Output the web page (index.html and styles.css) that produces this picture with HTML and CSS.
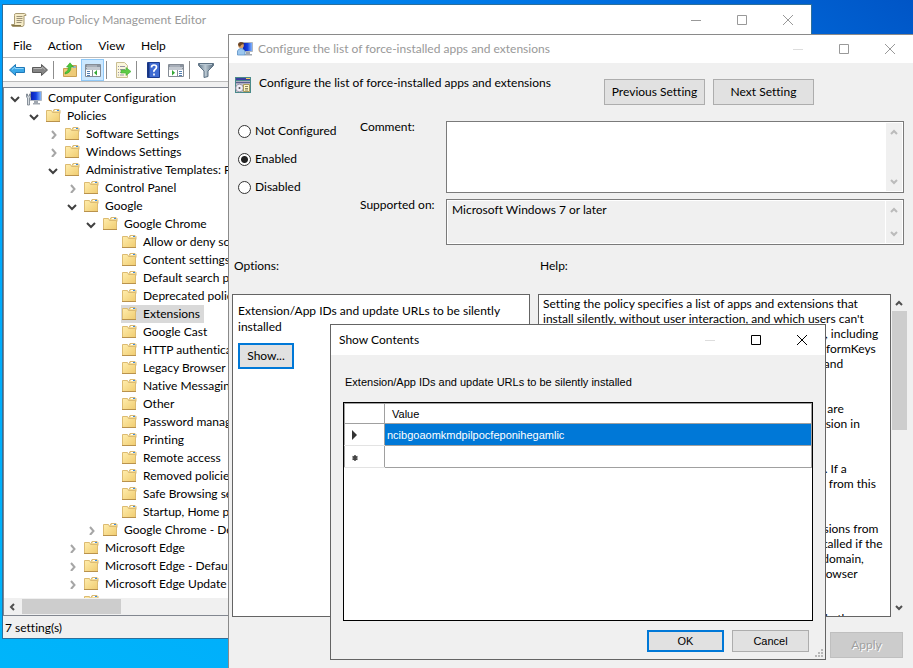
FILE: index.html
```
<!DOCTYPE html>
<html lang="en">
<head>
  <meta charset="UTF-8" />
  <meta name="viewport" content="width=device-width, initial-scale=1" />
  <title>Group Policy Management Editor</title>
  <link rel="stylesheet" href="styles.css">
</head>
<body>
  <!-- shared icons -->
  <svg class="sprite" aria-hidden="true">
    <linearGradient id="folderFill" x1="0" y1="0" x2="1" y2="1">
      <stop offset="0" stop-color="#ffedad" />
      <stop offset="1" stop-color="#f0cc70" />
    </linearGradient>
    <linearGradient id="screenFill" x1="0" y1="0" x2="1" y2="0">
      <stop offset="0" stop-color="#0a1cae" />
      <stop offset="0.5" stop-color="#1540e0" />
      <stop offset="1" stop-color="#8fc4ff" />
    </linearGradient>
    <linearGradient id="funnelFill" x1="0" y1="0" x2="1" y2="0">
      <stop offset="0" stop-color="#5c7285" />
      <stop offset="0.45" stop-color="#bccad4" />
      <stop offset="1" stop-color="#54697b" />
    </linearGradient>
    <symbol id="folder" viewBox="0 0 16 16">
      <path d="M8 3.500l1-2h5l1 1v3H8z" fill="#f5dd9a" stroke="#d8b974" />
      <path d="M10 2.500h2" stroke="#fff" />
      <path d="M12 2.500h2" stroke="#3d8be0" />
      <path d="M1.500 2.500h5l1 2h7v9h-13z" fill="url(#folderFill)" stroke="#dcbb72" />
      <path d="M1 13.500h14" stroke="#b9924c" />
    </symbol>
    <symbol id="open" viewBox="0 0 10 10"><path d="M1 4l4 4 4-4" fill="none" stroke="#404040" stroke-width="2" /></symbol>
    <symbol id="closed" viewBox="0 0 10 10"><path d="M4 2l3.500 4L4 10" fill="none" stroke="#a6a6a6" stroke-width="2" /></symbol>
    <symbol id="min" viewBox="0 0 10 10"><path d="M0 5.500h10" fill="none" stroke="currentColor" /></symbol>
    <symbol id="max" viewBox="0 0 10 10"><path d="M.5.5h9v9h-9z" fill="none" stroke="currentColor" /></symbol>
    <symbol id="close" viewBox="0 0 10 10"><path d="M0 0l10 10M10 0L0 10" fill="none" stroke="currentColor" /></symbol>
    <symbol id="up" viewBox="0 0 8 8"><path d="M1 6l3-3 3 3" fill="none" stroke="currentColor" stroke-width="2" /></symbol>
    <symbol id="down" viewBox="0 0 8 8"><path d="M1 2l3 3 3-3" fill="none" stroke="currentColor" stroke-width="2" /></symbol>
  </svg>

  <main class="desktop">
    <section class="window editor">
      <header class="titlebar">
        <svg class="icon" viewBox="0 0 16 16">
          <path d="M4.500 1.500h9q1.500 0 1.500 2h-2v9q0 2-2 2h-9q-1.500 0-1.500-2h3v-9q0-2 1-2z" fill="#f6ecc8" stroke="#a89a72" />
          <path d="M5.500 4.500h6M5.500 6.500h6M5.500 8.500h6M5.500 10.500h5" stroke="#9b9177" />
          <path d="M1 13.500h9" stroke="#857646" />
        </svg>
        <h1>Group Policy Management Editor</h1>
        <div class="controls">
          <button aria-label="Minimize"><svg><use href="#min" /></svg></button>
          <button aria-label="Maximize"><svg><use href="#max" /></svg></button>
          <button aria-label="Close"><svg><use href="#close" /></svg></button>
        </div>
      </header>
      <nav class="menubar">
        <button>File</button>
        <button>Action</button>
        <button>View</button>
        <button>Help</button>
      </nav>
      <div class="toolbar">
        <button aria-label="Back"><svg viewBox="0 0 16 16">
          <path d="M.5 8l6-5.500v3h9v5h-9v3z" fill="#3aa8e8" stroke="#1f78b8" /><path d="M3 7.500l3-2.500v1.500h8.500" fill="none" stroke="#8fd4f8" /></svg></button>
        <button aria-label="Forward"><svg viewBox="0 0 16 16">
          <path d="M15.500 8l-6-5.500v3h-9v5h9v3z" fill="#858585" stroke="#5a5a5a" /><path d="M1.500 6.500h8.500v-1.500l3 2.500" fill="none" stroke="#b4b4b4" /></svg></button>
        <i></i>
        <button aria-label="Up one level"><svg viewBox="0 0 16 16">
          <path d="M1.500 6.500h6l1-3h6v11h-13z" fill="#eecb78" stroke="#c8a052" /><path d="M9 5h5" stroke="#d9e6f4" /><path d="M11 5h3" stroke="#4b8fd0" />
          <path d="M3 10.500q3.500-1.500 3.500-5.500H4.500L8 .8l3.500 4.200H9q0 6-6 7z" fill="#4cc838" stroke="#2a9420" stroke-width=".5" /></svg></button>
        <button class="pressed" aria-label="Show tree"><svg viewBox="0 0 16 16">
          <path d="M.5 2.500h15v12H.5z" fill="#fff" stroke="#858c95" /><path d="M1 4h14M1 6.500h14" stroke="#8a939f" stroke-width="2" />
          <path d="M2 4h10M2 6.500h13" stroke="#dbe1e8" stroke-width=".7" /><path d="M7.500 8v6" stroke="#858c95" /><path d="M2 9.500h3M2 11.500h3M2 13.500h3" stroke="#537fb2" /><path d="M12 8v5.500L9 10.800z" fill="#35a835" /></svg></button>
        <i></i>
        <button aria-label="Export list"><svg viewBox="0 0 16 16">
          <path d="M1.500.5h8l3 3v12h-11z" fill="#fbf6dc" stroke="#c9be92" /><path d="M3 4.500h1M3 7.500h1M3 10.500h1M3 13h1M5 4.500h5M5 7.500h5M5 10.500h3M5 13h4" stroke="#9a94a6" />
          <path d="M6 8h5V5.500l5 4-5 4V11H6z" fill="#5fcb45" stroke="#3faf35" stroke-width=".6" /></svg></button>
        <i></i>
        <button aria-label="Help"><svg viewBox="0 0 16 16">
          <path d="M2.500.5h12v15h-12z" fill="#3f6bd2" stroke="#1c3c90" /><path d="M3.500 1v14" stroke="#173581" stroke-width="2" />
          <path d="M6.500 5.500q0-2.500 2.500-2.500t2.500 2q0 1.500-1.500 2.500T9 10M9 11.500v2" fill="none" stroke="#fff" stroke-width="1.700" /></svg></button>
        <button aria-label="Show action pane"><svg viewBox="0 0 16 16">
          <path d="M.5 2.500h15v12H.5z" fill="#fff" stroke="#858c95" /><path d="M1 4h14M1 6.500h14" stroke="#8a939f" stroke-width="2" />
          <path d="M2 4h10M1 6.500h13" stroke="#dbe1e8" stroke-width=".7" /><path d="M9.500 8v6" stroke="#858c95" /><path d="M11 9.500h3M11 11.500h3M11 13.500h3" stroke="#537fb2" /><path d="M4 8v5.500l3-2.700z" fill="#35a835" /></svg></button>
        <i></i>
        <button aria-label="Filter"><svg viewBox="0 0 16 16">
          <path d="M.5 1.500h15v2L10 9v5.500l-4 1V9L.5 3.500z" fill="url(#funnelFill)" stroke="#5d7183" /><path d="M2 2.500h12" stroke="#b6c6d2" /></svg></button>
      </div>

      <div class="pane">
        <ul class="tree">
          <li><div class="row"><svg class="twist"><use href="#open" /></svg>
            <svg class="icon" viewBox="0 0 16 16">
              <path d="M4.500 1.500h11v9h-11z" fill="url(#screenFill)" stroke="#b0b6bf" /><path d="M8 11h4v2h2v1.500H7V13h1z" fill="#a0a7b0" />
              <path d="M.5 4v3l1 1v7h2V8l1-1V4H3.500v2h-2V4z" fill="#d6dbe0" stroke="#717b86" stroke-width=".8" /></svg>Computer Configuration</div>
            <ul>
              <li><div class="row"><svg class="twist"><use href="#open" /></svg><svg class="icon"><use href="#folder" /></svg>Policies</div>
                <ul>
                  <li><div class="row"><svg class="twist"><use href="#closed" /></svg><svg class="icon"><use href="#folder" /></svg>Software Settings</div></li>
                  <li><div class="row"><svg class="twist"><use href="#closed" /></svg><svg class="icon"><use href="#folder" /></svg>Windows Settings</div></li>
                  <li><div class="row"><svg class="twist"><use href="#open" /></svg><svg class="icon"><use href="#folder" /></svg>Administrative Templates: Policy definitions</div>
                    <ul>
                      <li><div class="row"><svg class="twist"><use href="#closed" /></svg><svg class="icon"><use href="#folder" /></svg>Control Panel</div></li>
                      <li><div class="row"><svg class="twist"><use href="#open" /></svg><svg class="icon"><use href="#folder" /></svg>Google</div>
                        <ul>
                          <li><div class="row"><svg class="twist"><use href="#open" /></svg><svg class="icon"><use href="#folder" /></svg>Google Chrome</div>
                            <ul class="leaves">
                              <li><div class="row"><svg class="icon"><use href="#folder" /></svg>Allow or deny screen capture</div></li>
                              <li><div class="row"><svg class="icon"><use href="#folder" /></svg>Content settings</div></li>
                              <li><div class="row"><svg class="icon"><use href="#folder" /></svg>Default search provider</div></li>
                              <li><div class="row"><svg class="icon"><use href="#folder" /></svg>Deprecated policies</div></li>
                              <li><div class="row selected"><svg class="icon"><use href="#folder" /></svg>Extensions</div></li>
                              <li><div class="row"><svg class="icon"><use href="#folder" /></svg>Google Cast</div></li>
                              <li><div class="row"><svg class="icon"><use href="#folder" /></svg>HTTP authentication</div></li>
                              <li><div class="row"><svg class="icon"><use href="#folder" /></svg>Legacy Browser Support</div></li>
                              <li><div class="row"><svg class="icon"><use href="#folder" /></svg>Native Messaging</div></li>
                              <li><div class="row"><svg class="icon"><use href="#folder" /></svg>Other</div></li>
                              <li><div class="row"><svg class="icon"><use href="#folder" /></svg>Password manager</div></li>
                              <li><div class="row"><svg class="icon"><use href="#folder" /></svg>Printing</div></li>
                              <li><div class="row"><svg class="icon"><use href="#folder" /></svg>Remote access</div></li>
                              <li><div class="row"><svg class="icon"><use href="#folder" /></svg>Removed policies</div></li>
                              <li><div class="row"><svg class="icon"><use href="#folder" /></svg>Safe Browsing settings</div></li>
                              <li><div class="row"><svg class="icon"><use href="#folder" /></svg>Startup, Home page and New Tab page</div></li>
                            </ul>
                          </li>
                          <li><div class="row"><svg class="twist"><use href="#closed" /></svg><svg class="icon"><use href="#folder" /></svg>Google Chrome - Default Settings</div></li>
                        </ul>
                      </li>
                      <li><div class="row"><svg class="twist"><use href="#closed" /></svg><svg class="icon"><use href="#folder" /></svg>Microsoft Edge</div></li>
                      <li><div class="row"><svg class="twist"><use href="#closed" /></svg><svg class="icon"><use href="#folder" /></svg>Microsoft Edge - Default Settings</div></li>
                      <li><div class="row"><svg class="twist"><use href="#closed" /></svg><svg class="icon"><use href="#folder" /></svg>Microsoft Edge Update</div></li>
                      <li><div class="row"><svg class="icon last"><use href="#folder" /></svg></div></li>
                    </ul>
                  </li>
                </ul>
              </li>
            </ul>
          </li>
        </ul>
        <div class="hscroll">
          <svg viewBox="0 0 8 8"><path d="M6 1L3 4l3 3" fill="none" stroke="#505050" stroke-width="2" /></svg>
          <span class="thumb"></span>
        </div>
      </div>
      <footer class="statusbar">7 setting(s)</footer>
    </section>

    <section class="window policy">
      <header class="titlebar">
        <svg class="icon" viewBox="0 0 16 16">
          <path d="M5.500 1.500h10v9h-10z" fill="url(#screenFill)" stroke="#b0b6bf" /><path d="M9 11h4v2h2v1.500H8V13h1z" fill="#a0a7b0" />
          <circle cx="4" cy="4.500" r="2.800" fill="#d9a066" /><path d="M1 4q0-3 3-3t3 2q-3 0-4 3z" fill="#6b4526" /><path d="M.5 14V10q1-2.500 3.500-2.500T8 10v4z" fill="#9cc7ee" stroke="#5b8fc4" stroke-width=".8" /></svg>
        <h1>Configure the list of force-installed apps and extensions</h1>
        <div class="controls">
          <button aria-label="Minimize" disabled><svg><use href="#min" /></svg></button>
          <button aria-label="Maximize"><svg><use href="#max" /></svg></button>
          <button aria-label="Close"><svg><use href="#close" /></svg></button>
        </div>
      </header>
      <div class="policy-head">
        <svg class="icon" viewBox="0 0 16 16">
          <path d="M0 0h16v16H0z" fill="#4a8a8a" /><path d="M1 1h14v2H1z" fill="#3b3f9f" /><path d="M11 1.500h4" stroke="#f5d060" />
          <path d="M1 4h14v11H1z" fill="#c9c6cf" /><path d="M1 5.500h14" stroke="#5a5f8f" stroke-width="1.500" />
          <circle cx="4.500" cy="11" r="3.800" fill="#f0ecf6" stroke="#8d8a9a" stroke-width=".8" /><circle cx="4.500" cy="11" r="1" fill="#555" />
          <path d="M8.500 7.500h6v7h-6z" fill="#fff6c8" stroke="#a89a5a" /><path d="M10 9.500h3M10 11.500h3M10 13h3" stroke="#6d6745" stroke-width=".8" /></svg>
        <h2>Configure the list of force-installed apps and extensions</h2>
        <button class="btn">Previous Setting</button>
        <button class="btn">Next Setting</button>
      </div>
      <form class="state">
        <div class="radios">
          <label><input type="radio" name="state">Not Configured</label>
          <label><input type="radio" name="state" checked>Enabled</label>
          <label><input type="radio" name="state">Disabled</label>
        </div>
        <div class="fields">
          <label for="comment">Comment:</label>
          <div class="box">
            <textarea id="comment"></textarea>
            <div class="vscroll"><svg><use href="#up" /></svg><svg><use href="#down" /></svg></div>
          </div>
          <label for="supported">Supported on:</label>
          <div class="box readonly">
            <textarea id="supported" readonly>Microsoft Windows 7 or later</textarea>
            <div class="vscroll"><svg><use href="#up" /></svg><svg><use href="#down" /></svg></div>
          </div>
        </div>
      </form>
      <div class="columns">
        <div class="options">
          <h3>Options:</h3>
          <div class="panel">
            <p>Extension/App IDs and update URLs to be silently installed</p>
            <button class="btn default">Show...</button>
          </div>
        </div>
        <div class="help">
          <h3>Help:</h3>
          <div class="help-body">
            <div class="panel">Setting the policy specifies a list of apps and extensions that
install silently, without user interaction, and which users can't
uninstall or turn off. Permissions are granted implicitly, including
for the enterprise.deviceAttributes and enterprise.platformKeys
extension APIs. (These 2 APIs aren't available to apps and
extensions that aren't force-installed.)

Leaving the policy unset means no apps or extensions are
autoinstalled, and users can uninstall any app or extension in
Google Chrome.

This policy supersedes ExtensionInstallBlocklist policy. If a
previously force-installed app or extension is removed from this
list, Google Chrome automatically uninstalls it.

On Microsoft® Windows® instances, apps and extensions from
outside the Chrome Web Store can only be forced installed if the
instance is joined to a Microsoft® Active Directory® domain,
running on Windows 10 Pro, or enrolled in Chrome Browser
Cloud Management.

On macOS instances, apps and extensions from outside the</div>
            <div class="vscroll active"><svg><use href="#up" /></svg><span class="thumb"></span><svg><use href="#down" /></svg></div>
          </div>
        </div>
      </div>
      <div class="actions">
        <button class="btn" disabled>Apply</button>
      </div>
    </section>

    <section class="window contents">
      <header class="titlebar">
        <h1>Show Contents</h1>
        <div class="controls">
          <button aria-label="Minimize" disabled><svg><use href="#min" /></svg></button>
          <button aria-label="Maximize"><svg><use href="#max" /></svg></button>
          <button aria-label="Close"><svg><use href="#close" /></svg></button>
        </div>
      </header>
      <p id="gridLabel">Extension/App IDs and update URLs to be silently installed</p>
      <div class="grid">
        <table aria-labelledby="gridLabel">
          <thead>
            <tr><th></th><th>Value</th></tr>
          </thead>
          <tbody>
            <tr class="current"><th><svg viewBox="0 0 6 10"><path d="M0 0l5 5-5 5z" fill="#333" /></svg></th><td>ncibgoaomkmdpilpocfeponihegamlic</td></tr>
            <tr><th><svg viewBox="0 0 6 10"><path d="M3 3v6M.5 4.500l5 3M5.500 4.500l-5 3" stroke="#444" stroke-width="1.500" /></svg></th><td></td></tr>
          </tbody>
        </table>
      </div>
      <div class="actions">
        <button class="btn default">OK</button>
        <button class="btn">Cancel</button>
      </div>
      <svg class="grip" viewBox="0 0 8 8"><path d="M6 0h2v2H6zM3 3h2v2H3zM6 3h2v2H6zM0 6h2v2H0zM3 6h2v2H3zM6 6h2v2H6z" fill="#b8b8b8" /></svg>
    </section>
  </main>
</body>
</html>
```
FILE: styles.css
```
* {
  box-sizing: border-box;
}

html, body {
  margin: 0;
  height: 100%;
  overflow: hidden;
  font-family: Lato, "Open Sans", sans-serif;
  font-size: 12px;
  font-variant-ligatures: none;
  line-height: 16px;
  color: #000;
}

h1, h2, h3, p, ul {
  margin: 0;
  padding: 0;
  font-size: inherit;
  font-weight: normal;
  list-style: none;
}

button, textarea {
  font: inherit;
  color: inherit;
}

svg {
  display: block;
  flex: none;
}

.sprite {
  position: absolute;
  width: 0;
  height: 0;
}

.icon {
  width: 16px;
  height: 16px;
}

.desktop {
  position: relative;
  height: 100%;
  overflow: hidden;
  background: linear-gradient(to bottom left, #0055c6 0%, #0074e4 20%, #0098fa 46%, #00a8fc 65%, #00b5fa 100%);
}

/* windows */
.window {
  position: absolute;
  display: flex;
  flex-direction: column;
  background: #f0f0f0;
  border: 1px solid #6b7880;
}

.titlebar {
  display: flex;
  align-items: center;
  flex: none;
  height: 30px;
  padding-left: 8px;
  gap: 5px;
  background: #fff;
  color: #999;
}

.titlebar h1 {
  flex: 1;
  white-space: nowrap;
}

.controls {
  display: flex;
}

.controls button {
  display: flex;
  align-items: center;
  justify-content: center;
  width: 46px;
  height: 28px;
  padding: 0;
  border: 0;
  background: none;
}

.controls button:disabled {
  color: #ddd;
}

.controls svg {
  width: 10px;
  height: 10px;
}

.btn {
  height: 26px;
  padding: 0 4px;
  border: 1px solid #adadad;
  background: #e1e1e1;
  white-space: nowrap;
}

.btn.default {
  border: 2px solid #0078d7;
}

.btn:disabled {
  border-color: #bfbfbf;
  background: #ccc;
  color: #a0a0a0;
  text-shadow: 1px 1px #fff;
}

/* editor */
.editor {
  top: 4px;
  right: 101px;
  bottom: 29px;
  left: 2px;
  border-color: #2c6f9c;
}

.menubar {
  display: flex;
  flex: none;
  height: 23px;
  padding-left: 2px;
  background: #fff;
  border-bottom: 1px solid #bbb;
}

.menubar button {
  padding: 0 8px;
  border: 0;
  background: none;
}

.toolbar {
  display: flex;
  align-items: center;
  flex: none;
  height: 24px;
  padding-left: 2px;
  background: #fff;
  border-bottom: 1px solid #bbb;
}

.toolbar button {
  display: flex;
  align-items: center;
  justify-content: center;
  width: 23px;
  height: 22px;
  padding: 0;
  border: 1px solid transparent;
  background: none;
}

.toolbar button.pressed {
  border-color: #90c8f6;
  background: #cce8ff;
}

.toolbar svg {
  width: 16px;
  height: 16px;
}

.toolbar i {
  width: 1px;
  height: 18px;
  margin: 0 4px 0 2px;
  background: #8d8d8d;
}

.pane {
  display: flex;
  flex-direction: column;
  flex: 1;
  min-height: 0;
  margin-top: 5px;
  border: 1px solid #828790;
  background: #fff;
}

.tree {
  flex: 1;
  min-height: 0;
  padding: 1px 0 0 6px;
  overflow: hidden;
}

.tree ul {
  padding-left: 19px;
}

.row {
  display: flex;
  align-items: center;
  width: max-content;
  height: 18px;
  padding-right: 4px;
  white-space: nowrap;
}

.row .twist {
  width: 10px;
  height: 10px;
  margin-right: 6px;
}

.row .icon {
  margin-right: 6px;
}

.tree .leaves {
  padding-left: 35px;
}

.tree .last {
  margin-left: 16px;
}

.row.selected {
  background: #d9d9d9;
}

.hscroll {
  display: flex;
  align-items: center;
  flex: none;
  height: 17px;
  padding-left: 4px;
  gap: 6px;
  background: #f0f0f0;
}

.hscroll svg {
  width: 8px;
  height: 8px;
}

.hscroll .thumb {
  width: 99px;
  height: 15px;
  background: #cdcdcd;
}

.statusbar {
  flex: none;
  height: 22px;
  padding: 4px 2px 0;
}

/* policy setting */
.policy {
  top: 34px;
  right: 0;
  bottom: 0;
  left: 228px;
  border-width: 1px 0 0 1px;
  border-color: #8a8a8a;
}

.policy .titlebar {
  height: 28px;
}

.policy-head {
  display: flex;
  align-items: flex-start;
  padding: 16px 99px 0 6px;
  gap: 8px;
}

.policy-head .icon {
  margin-top: -2px;
}

.policy-head h2 {
  flex: 1;
  margin-top: -4px;
  white-space: nowrap;
}

.policy-head .btn {
  width: 101px;
}

.state {
  display: grid;
  grid-template-columns: 122px 1fr;
  padding: 16px 9px 0;
}

.radios {
  display: flex;
  flex-direction: column;
  gap: 12px;
  padding-top: 2px;
}

.radios label {
  display: flex;
  align-items: center;
  gap: 4px;
  height: 16px;
}

.radios input {
  appearance: none;
  flex: none;
  width: 13px;
  height: 13px;
  margin: 0;
  border: 1px solid #333;
  border-radius: 50%;
  background: #fff;
}

.radios input:checked {
  background: radial-gradient(circle, #222 3px, #fff 4px);
}

.fields {
  display: grid;
  grid-template-columns: 86px 1fr;
  grid-template-rows: 72px 46px;
  row-gap: 6px;
}

.fields label {
  margin-top: -2px;
  white-space: nowrap;
}

.box {
  display: flex;
  padding: 1px;
  border: 1px solid #7a7a7a;
  background: #fff;
}

.box textarea {
  flex: 1;
  min-width: 0;
  padding: 1px 4px;
  border: 0;
  background: none;
  resize: none;
  outline: none;
  overflow: hidden;
}

.box.readonly textarea {
  background: #f0f0f0;
  margin-right: 1px;
}

.vscroll {
  display: flex;
  flex-direction: column;
  align-items: center;
  justify-content: space-between;
  flex: none;
  width: 16px;
  padding: 5px 0;
  background: #f0f0f0;
  color: #bbb;
}

.vscroll svg {
  width: 8px;
  height: 8px;
}

.vscroll.active {
  color: #505050;
}

.columns {
  display: grid;
  grid-template-columns: minmax(0, 298fr) minmax(0, 369fr);
  column-gap: 8px;
  flex: 1;
  min-height: 0;
  padding: 13px 6px 0 3px;
}

.options, .help {
  display: flex;
  flex-direction: column;
  min-height: 0;
}

.columns h3 {
  padding: 0 2px;
  margin-bottom: 20px;
}

.panel {
  flex: 1;
  min-height: 0;
  min-width: 0;
  padding: 8px 5px;
  overflow: hidden;
  border: 1px solid #646464;
  background: #fff;
}

.options .btn {
  width: 56px;
  margin-top: 8px;
}

.help-body {
  display: flex;
  flex: 1;
  min-height: 0;
}

.help .panel {
  padding: 1px 4px;
  line-height: 15px;
  white-space: pre;
}

.help .vscroll {
  justify-content: flex-start;
  gap: 4px;
}

.help .vscroll .thumb {
  width: 15px;
  height: 119px;
  margin-bottom: auto;
  background: #cdcdcd;
}

.actions {
  display: flex;
  justify-content: flex-end;
  gap: 8px;
}

.policy .actions {
  padding: 15px 10px 10px 0;
}

.policy .actions .btn {
  width: 73px;
}

/* list editor */
.contents {
  top: 324px;
  right: 87px;
  bottom: 8px;
  left: 330px;
  border-color: #646464;
  font-family: "Liberation Sans", Arial, sans-serif;
  font-size: 11px;
}

.contents .titlebar {
  color: #000;
  font-family: Lato, "Open Sans", sans-serif;
  font-size: 12px;
}

.contents p {
  padding: 19px 14px 12px;
}

.grid {
  flex: 1;
  min-height: 0;
  margin: 0 12px;
  border: 1px solid #000;
  background: #fff;
}

.grid table {
  width: 100%;
  border-collapse: collapse;
}

.grid th, .grid td {
  height: 22px;
  padding: 0 2px;
  border: 1px solid #a0a0a0;
  font-weight: normal;
  text-align: left;
}

.grid th:first-child {
  width: 40px;
  padding-left: 7px;
  border-color: #e3e3e3 #a0a0a0 #e3e3e3 #a0a0a0;
}

.grid thead th {
  height: 20px;
  padding-left: 7px;
}

.grid thead th:first-child {
  border-color: #a0a0a0;
}

.grid svg {
  width: 6px;
  height: 10px;
}

.grid .current td {
  background: #0078d7;
  color: #fff;
}

.contents .actions {
  padding: 9px 16px 7px;
}

.contents .btn {
  width: 77px;
  height: 22px;
}

.grip {
  position: absolute;
  right: 2px;
  bottom: 2px;
  width: 8px;
  height: 8px;
}
```
